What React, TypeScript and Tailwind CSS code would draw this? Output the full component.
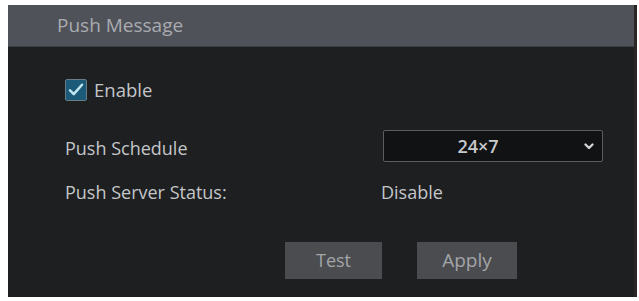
import React, { useState } from 'react';

export default function App() {
  const [enabled, setEnabled] = useState(true);

  return (
    <div className="w-[639px] h-[301px] bg-white pt-[5px] pl-[8px]" style={{ fontFamily: '"Open Sans", "Noto Sans", sans-serif' }}>
      <div className="w-[629px] h-[292px] bg-[#1d1f21] flex flex-col border-r-[3px] border-[#2a2626]">
        {/* Header */}
        <div className="h-[42px] bg-[#4f5259] flex items-center pl-[49px] border-b border-[#3d3f44]">
          <span className="text-[19px] text-[#a9abb0]">Push Message</span>
        </div>

        <div className="flex flex-col pl-[57px] pt-[32px]">
          <label className="flex items-center gap-[7px] h-[22px] cursor-pointer" onClick={() => setEnabled(!enabled)}>
            <span className="w-[22px] h-[22px] rounded-[2px] border border-[#6a7c86] bg-[#1b5a78] flex items-center justify-center">
              {enabled && (
                <svg className="w-[18px] h-[18px]" viewBox="0 0 24 24" fill="none" stroke="#bfe6f0" strokeWidth={3.4} strokeLinecap="round" strokeLinejoin="round">
                  <path d="M4 12.5l5 5L20 5" />
                </svg>
              )}
            </span>
            <span className="text-[18.5px] text-[#c4c6c9]">Enable</span>
          </label>

          <div className="flex items-center mt-[29px] h-[32px]">
            <span className="w-[318px] pt-[4px] text-[18px] text-[#c4c6c9]">Push Schedule</span>
            <div className="w-[220px] h-[32px] border border-[#5a5d62] rounded-[2px] bg-[#111214] flex items-center relative">
              <span className="flex-1 text-center pr-[30px] text-[18px] font-semibold text-[#c8cacc]">24×7</span>
              <svg className="absolute right-[7px] w-[12px] h-[12px]" viewBox="0 0 12 12" fill="none" stroke="#d0d2d4" strokeWidth={2.4} strokeLinecap="round" strokeLinejoin="round">
                <path d="M2.5 4.5L6 8l3.5-3.5" />
              </svg>
            </div>
          </div>

          <div className="flex items-center mt-[19px] h-[22px]">
            <span className="w-[316px] text-[18px] text-[#c4c6c9]">Push Server Status:</span>
            <span className="text-[18px] text-[#c4c6c9]">Disable</span>
          </div>

          <div className="flex mt-[39px] ml-[220px] gap-[35px]">
            <button className="w-[97px] h-[37px] bg-[#4a4c4f] text-[18px] text-[#a3a5a8]">Test</button>
            <button className="w-[100px] h-[37px] bg-[#4a4c4f] text-[19px] text-[#a3a5a8]">Apply</button>
          </div>
        </div>
      </div>
    </div>
  );
}
